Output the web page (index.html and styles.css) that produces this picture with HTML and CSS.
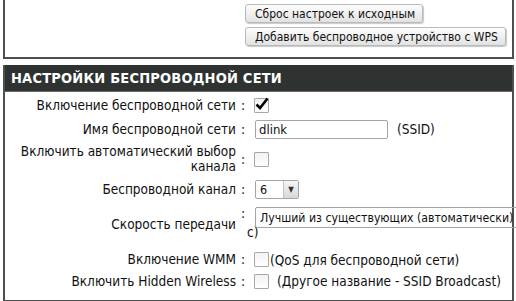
FILE: index.html
```html
<!DOCTYPE html>
<html lang="ru">
<head>
  <meta charset="UTF-8">
  <title>Настройки беспроводной сети</title>
  <link rel="stylesheet" href="styles.css">
</head>
<body>
  <div class="top-box">
    <div class="top-buttons">
      <button class="btn">Сброс настроек к исходным</button>
      <button class="btn">Добавить беспроводное устройство с WPS</button>
    </div>
  </div>

  <div class="section">
    <h2 class="section-title">НАСТРОЙКИ БЕСПРОВОДНОЙ СЕТИ</h2>
    <div class="form">
      <div class="row r1">
        <div class="label">Включение беспроводной сети</div>
        <div class="colon">:</div>
        <div class="ctrl">
          <span class="check checked">
            <svg viewBox="0 0 16 16" width="16" height="16"><path d="M2.5 8.5 L6 12 L13.5 2.5" fill="none" stroke="#000" stroke-width="2.6"/></svg>
          </span>
        </div>
      </div>
      <div class="row r2">
        <div class="label">Имя беспроводной сети</div>
        <div class="colon">:</div>
        <div class="ctrl">
          <div class="text-input">dlink</div>
          <span class="note ssid">(SSID)</span>
        </div>
      </div>
      <div class="row r3">
        <div class="label">Включить автоматический выбор<br>канала</div>
        <div class="colon">:</div>
        <div class="ctrl"><span class="check"></span></div>
      </div>
      <div class="row r4">
        <div class="label">Беспроводной канал</div>
        <div class="colon">:</div>
        <div class="ctrl">
          <div class="select small">
            <span class="select-value">6</span>
            <span class="select-arrow">▼</span>
          </div>
        </div>
      </div>
      <div class="row r5">
        <div class="label">Скорость передачи</div>
        <div class="colon">:<span class="tail">с)</span></div>
        <div class="ctrl top">
          <div class="select wide">
            <span class="select-value">Лучший из существующих (автоматически)</span>
          </div>
        </div>
      </div>
      <div class="row r6">
        <div class="label">Включение WMM</div>
        <div class="colon">:</div>
        <div class="ctrl">
          <span class="check"></span>
          <span class="note">(QoS для беспроводной сети)</span>
        </div>
      </div>
      <div class="row r7">
        <div class="label">Включить Hidden Wireless</div>
        <div class="colon">:</div>
        <div class="ctrl">
          <span class="check"></span>
          <span class="note spaced">(Другое название - SSID Broadcast)</span>
        </div>
      </div>
    </div>
  </div>
</body>
</html>
```

FILE: styles.css
```css
body {
  margin: 0;
  background-color: #fff;
  font-family: 'DejaVu Sans Condensed', 'DejaVu Sans', sans-serif;
  font-size: 13.5px;
  color: #111;
  overflow: hidden;
}

.top-box {
  height: 57px;
  margin: 0 2px 0 3px;
  border: 2px solid #4f4f4f;
  border-top: none;
}

.top-buttons {
  display: flex;
  flex-direction: column;
  align-items: flex-start;
  gap: 4px;
  padding: 4px 0 0 240px;
}

.btn {
  font-family: inherit;
  font-size: 12px;
  color: #111;
  height: 19px;
  padding: 0 7px 0 9px;
  white-space: nowrap;
  background: linear-gradient(#fdfdfd, #e2e2e2);
  border: 1px solid #b9b9b9;
  border-radius: 3px;
  box-shadow: 1px 1px 1px #c8c8c8;
}

.section {
  margin: 6px 2px 0 3px;
  height: 235px;
  border: 2px solid #4f4f4f;
  border-top: none;
}

.section-title {
  margin: 0;
  height: 26px;
  line-height: 27px;
  padding-left: 6px;
  background-color: #2e3231;
  border-bottom: 1px solid #6a6a6a;
  color: #fff;
  font-size: 14.5px;
  font-weight: bold;
  letter-spacing: 0.2px;
}

.form {
  display: grid;
  grid-template-columns: 231px 17px 1fr;
  padding-top: 2px;
}

.row {
  display: contents;
}

.label {
  text-align: right;
  display: flex;
  align-items: center;
  justify-content: flex-end;
  line-height: 15px;
}

.colon {
  display: flex;
  flex-direction: column;
  justify-content: center;
  padding-left: 5px;
  line-height: 15px;
}

.tail {
  margin-top: 4px;
  padding-left: 6px;
  white-space: nowrap;
}

.ctrl {
  display: flex;
  align-items: center;
  white-space: nowrap;
}

.ctrl.top {
  align-items: flex-start;
  padding-top: 4px;
}

.r1 > div { height: 22px; }
.r2 > div { height: 26px; }
.r3 > div { height: 34px; }
.r4 > div { height: 27px; }
.r5 > div { height: 42px; }
.r6 > div { height: 21px; }
.r7 > div { height: 22px; }

.r5 .colon {
  justify-content: flex-start;
  padding-top: 3px;
}

.r5 .label {
  padding-bottom: 4px;
}

.check {
  position: relative;
  display: inline-block;
  width: 13px;
  height: 13px;
  border: 1px solid #a8a8a8;
  border-radius: 1px;
  background: linear-gradient(#f2f2f2, #fff);
  margin-left: 1px;
}

.check svg {
  position: absolute;
  left: -1px;
  top: -3px;
}

.text-input {
  width: 128px;
  height: 17px;
  line-height: 17px;
  padding-left: 3px;
  border: 1px solid #a5a5a5;
  border-radius: 2px;
  margin-left: 2px;
  font-size: 13px;
}

.note {
  margin-left: 1px;
}

.note.ssid {
  margin-left: 9px;
}

.note.spaced {
  margin-left: 8px;
}

.select {
  display: flex;
  align-items: center;
  height: 17px;
  border: 1px solid #a5a5a5;
  border-radius: 2px;
  margin-left: 2px;
  font-size: 12.5px;
}

.select-value {
  padding-left: 4px;
}

.select.small {
  width: 42px;
}

.select.small .select-value {
  flex: 1;
}

.select-arrow {
  width: 14px;
  height: 17px;
  line-height: 17px;
  text-align: center;
  font-size: 8px;
  color: #333;
  border-left: 1px solid #c4c4c4;
  background: linear-gradient(#f6f6f6, #d8d8d8);
}

.select.wide {
  width: 290px;
  height: 19px;
  font-size: 12.2px;
}
```
